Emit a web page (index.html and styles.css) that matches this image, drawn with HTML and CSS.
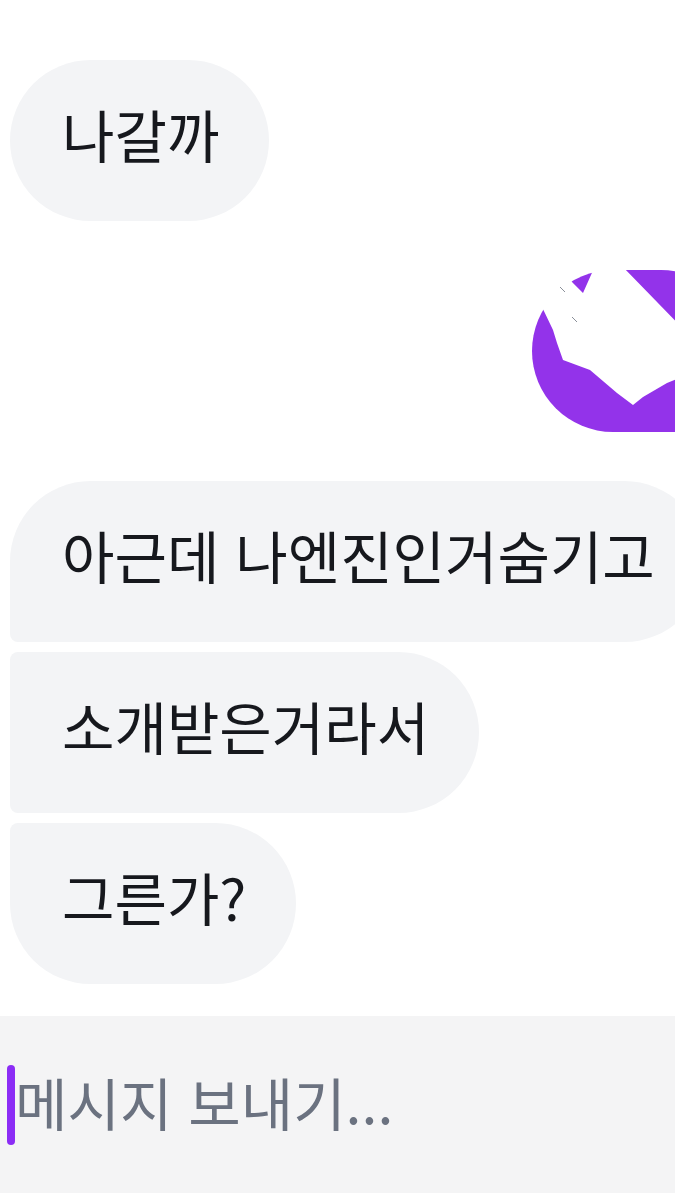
FILE: index.html
```html
<!DOCTYPE html>
<html lang="ko">
<head>
<meta charset="utf-8">
<title>Chat</title>
<link rel="stylesheet" href="styles.css">
</head>
<body>
<div class="screen">
  <div class="thread">
    <div class="group">
      <div class="bubble in single">나갈까</div>
    </div>
    <div class="group out-group">
      <div class="bubble out">
        <svg class="scribble" viewBox="-10 -4 170 180" width="170" height="180" aria-hidden="true">
          <path d="M40 12 L51 23 L63 -4 L90 -4 L160 68 L160 103 L135 113 L111 127 L101 135 L85 123 L58 100 L31 90 L25 73 L21 60 L10 37 L-10 30 L-10 -4 L30 -4 Z" fill="#ffffff"/>
          <path d="M28 17 L33 22 M40 47 L45 52" stroke="#8a8f99" stroke-width="1" fill="none"/>
        </svg>
      </div>
    </div>
    <div class="group">
      <div class="bubble in first">아근데 나엔진인거숨기고</div>
      <div class="bubble in middle">소개받은거라서</div>
      <div class="bubble in last">그른가?</div>
    </div>
  </div>
  <div class="composer">
    <span class="caret"></span>
    <span class="placeholder">메시지 보내기...</span>
  </div>
</div>
</body>
</html>
```

FILE: styles.css
```css
html, body {
  margin: 0;
  padding: 0;
  background: #ffffff;
  overflow: hidden;
}

.screen {
  width: 675px;
  height: 1200px;
  overflow: hidden;
  font-family: "Noto Sans CJK KR", "Noto Sans", sans-serif;
  display: flex;
  flex-direction: column;
}

.thread {
  display: flex;
  flex-direction: column;
  gap: 49px;
  padding: 60px 0 0 10px;
}

.group {
  display: flex;
  flex-direction: column;
  align-items: flex-start;
  gap: 10px;
}

.out-group {
  align-items: flex-end;
}

.bubble {
  box-sizing: border-box;
  height: 161px;
  display: flex;
  align-items: center;
  padding: 0 50px 14px 52px;
  font-size: 57px;
  line-height: 1;
  color: #16181d;
  white-space: nowrap;
  flex-shrink: 0;
}

.in {
  background: #f3f4f6;
}

.single {
  border-radius: 81px;
}

.first {
  border-radius: 81px 81px 81px 8px;
}

.middle {
  border-radius: 8px 81px 81px 8px;
}

.last {
  border-radius: 8px 81px 81px 81px;
}

.out {
  position: relative;
  background: #9333ea;
  width: 210px;
  height: 162px;
  padding: 0;
  margin-right: -67px;
  border-radius: 81px 81px 8px 81px;
}

.scribble {
  position: absolute;
  left: -10px;
  top: -4px;
}

.composer {
  margin-top: 32px;
  height: 177px;
  background: #f4f4f5;
  display: flex;
  align-items: center;
  padding-left: 7px;
}

.caret {
  width: 8px;
  height: 80px;
  border-radius: 4px;
  background: #8b2cf5;
  flex-shrink: 0;
}

.placeholder {
  font-size: 57px;
  line-height: 1;
  color: #6b7280;
  margin-left: 0;
  padding-bottom: 6px;
}
```
